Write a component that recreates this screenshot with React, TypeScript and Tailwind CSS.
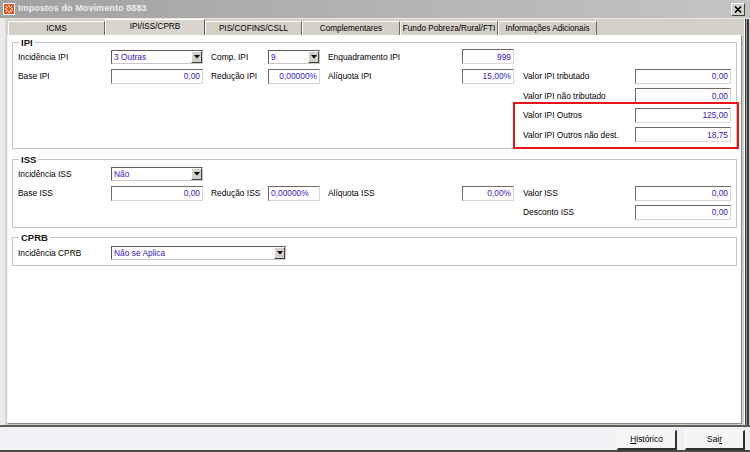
import React from "react";

const VALUE = "text-[#3324c4]";

function Label({ w, children }: { w: string; children: React.ReactNode }) {
  return (
    <span className={`${w} flex-none whitespace-nowrap text-[8.4px] leading-[10px] text-[#000]`}>
      {children}
    </span>
  );
}

function Input({ w, value, left }: { w: string; value: string; left?: boolean }) {
  return (
    <div
      className={`${w} h-[15px] flex-none flex items-center bg-white border border-t-[#6a6a6a] border-l-[#6a6a6a] border-r-[#d6d6d6] border-b-[#d6d6d6] px-[2px] text-[8.4px] leading-[10px] ${VALUE} ${
        left ? "justify-start" : "justify-end"
      }`}
    >
      {value}
    </div>
  );
}

function Select({ w, value }: { w: string; value: string }) {
  return (
    <div className={`${w} h-[14px] flex-none flex items-stretch bg-white border border-t-[#5a5a5a] border-l-[#5a5a5a] border-r-[#c8c8c8] border-b-[#c8c8c8]`}>
      <span className={`flex-1 pl-[2px] text-[8.4px] leading-[12px] ${VALUE}`}>{value}</span>
      <span className="w-[11px] flex items-center justify-center bg-[#d4d0c8] border border-t-white border-l-white border-r-[#404040] border-b-[#404040]">
        <svg width="6" height="4" viewBox="0 0 6 4">
          <path d="M0 0h6L3 3.5z" fill="#000" />
        </svg>
      </span>
    </div>
  );
}

function Group({ title, className, children }: { title: string; className: string; children: React.ReactNode }) {
  return (
    <fieldset className={`relative mx-[4px] border border-[#c4c4c4] pl-[5px] pr-[5px] ${className}`}>
      <legend className="ml-[1px] px-[2px] text-[9.5px] leading-[9px] font-bold text-[#111]">{title}</legend>
      {children}
    </fieldset>
  );
}

const tabs = [
  { label: "ICMS", w: "w-[97px]" },
  { label: "IPI/ISS/CPRB", w: "w-[100px]", active: true },
  { label: "PIS/COFINS/CSLL", w: "w-[97px]" },
  { label: "Complementares", w: "w-[98px]" },
  { label: "Fundo Pobreza/Rural/FTI", w: "w-[98px]" },
  { label: "Informações Adicionais", w: "w-[99px]" },
];

export default function App() {
  return (
    <div className="w-[750px] h-[452px] flex flex-col overflow-hidden bg-[#ececec] font-['Liberation_Sans',Arial,sans-serif]">
      {/* Title bar */}
      <div className="h-[19px] flex-none flex items-center bg-gradient-to-r from-[#a2a2a2] to-[#c4c4c4] border-b border-[#e8e8e8] pl-[3px] pr-[5px]">
        <svg width="12" height="12" viewBox="0 0 12 12" className="flex-none">
          <rect x="0" y="0" width="12" height="12" fill="#fff" />
          <rect x="1" y="1" width="10" height="10" fill="#e8581c" />
          <path d="M3 3l2 2M9 3L7 5M3 9l2-2M9 9L7 7M6 2v2M6 8v2M2 6h2M8 6h2" stroke="#fff" strokeWidth="1" />
        </svg>
        <span className="ml-[3px] text-[9px] font-bold text-[#ededed] tracking-[0.1px]">Impostos do Movimento 8883</span>
        <div className="ml-auto w-[14px] h-[13px] flex items-center justify-center bg-[#d4d0c8] border border-t-white border-l-white border-r-[#404040] border-b-[#404040]">
          <svg width="8" height="7" viewBox="0 0 8 7">
            <path d="M1 0.5l6 6M7 0.5l-6 6" stroke="#000" strokeWidth="1.6" />
          </svg>
        </div>
      </div>

      {/* Middle */}
      <div className="flex-1 flex min-h-0">
        <div className="w-[6px] flex-none bg-[#ebebeb] border-r border-[#d9d9d9]" />

        <div className="flex-1 flex flex-col bg-[#d4d0c8] pb-[1px]">
          {/* Tabs */}
          <div className="h-[16px] flex-none flex items-end pl-[2px]">
            {tabs.map((t) =>
              t.active ? (
                <div
                  key={t.label}
                  className={`${t.w} h-[16px] flex-none flex items-start justify-center pt-[2px] bg-[#dad6cf] border-t border-l border-t-white border-l-white border-r border-r-[#5a5a5a] text-[8.2px] leading-[10px] text-[#000]`}
                >
                  {t.label}
                </div>
              ) : (
                <div
                  key={t.label}
                  className={`${t.w} h-[14px] flex-none flex items-center justify-center bg-[#d4d0c8] border-t border-l border-t-white border-l-white border-r border-r-[#6a6a6a] text-[8.2px] leading-[10px] text-[#000]`}
                >
                  {t.label}
                </div>
              )
            )}
          </div>

          {/* Panel */}
          <div className="flex-1 ml-[1px] mr-[2px] bg-white border border-t-white border-l-[#f4f4f4] border-r-[#8a8a8a] border-b-[#8a8a8a]">
            <Group title="IPI" className="mt-[2px] pb-[3px]">
              <div className="flex items-center h-[19.5px]">
                <Label w="w-[93px]">Incidência IPI</Label>
                <Select w="w-[92px]" value="3 Outras" />
                <span className="w-[8px] flex-none" />
                <Label w="w-[57px]">Comp. IPI</Label>
                <Select w="w-[52px]" value="9" />
                <span className="w-[8px] flex-none" />
                <Label w="w-[134px]">Enquadramento IPI</Label>
                <Input w="w-[52px]" value="999" />
              </div>
              <div className="flex items-center h-[19.5px]">
                <Label w="w-[93px]">Base IPI</Label>
                <Input w="w-[92px]" value="0,00" />
                <span className="w-[8px] flex-none" />
                <Label w="w-[57px]">Redução IPI</Label>
                <Input w="w-[52px]" value="0,00000%" />
                <span className="w-[8px] flex-none" />
                <Label w="w-[134px]">Alíquota IPI</Label>
                <Input w="w-[52px]" value="15,00%" />
                <span className="w-[9px] flex-none" />
                <Label w="w-[112px]">Valor IPI tributado</Label>
                <Input w="w-[96px]" value="0,00" />
              </div>
              <div className="flex items-center h-[19.5px] pl-[505px]">
                <Label w="w-[112px]">Valor IPI não tributado</Label>
                <Input w="w-[96px]" value="0,00" />
              </div>
              <div className="relative">
                <div className="flex items-center h-[19.5px] pl-[505px]">
                  <Label w="w-[112px]">Valor IPI Outros</Label>
                  <Input w="w-[96px]" value="125,00" />
                </div>
                <div className="flex items-center h-[19.5px] pl-[505px]">
                  <Label w="w-[112px]">Valor IPI Outros não dest.</Label>
                  <Input w="w-[96px]" value="18,75" />
                </div>
                <div className="absolute left-[495px] top-[-4px] w-[226px] h-[47px] border-2 border-[#e8141c] pointer-events-none" />
              </div>
            </Group>

            <Group title="ISS" className="mt-[6px] pt-[1px] pb-[5px]">
              <div className="flex items-center h-[19px]">
                <Label w="w-[93px]">Incidência ISS</Label>
                <Select w="w-[92px]" value="Não" />
              </div>
              <div className="flex items-center h-[19px]">
                <Label w="w-[93px]">Base ISS</Label>
                <Input w="w-[92px]" value="0,00" />
                <span className="w-[8px] flex-none" />
                <Label w="w-[57px]">Redução ISS</Label>
                <Input w="w-[52px]" value="0,00000%" left />
                <span className="w-[8px] flex-none" />
                <Label w="w-[134px]">Alíquota ISS</Label>
                <Input w="w-[52px]" value="0,00%" />
                <span className="w-[9px] flex-none" />
                <Label w="w-[112px]">Valor ISS</Label>
                <Input w="w-[96px]" value="0,00" />
              </div>
              <div className="flex items-center h-[19px] pl-[505px]">
                <Label w="w-[112px]">Desconto ISS</Label>
                <Input w="w-[96px]" value="0,00" />
              </div>
            </Group>

            <Group title="CPRB" className="mt-[5px] pt-[2px] pb-[2px]">
              <div className="flex items-center h-[19px]">
                <Label w="w-[93px]">Incidência CPRB</Label>
                <Select w="w-[175px]" value="Não se Aplica" />
              </div>
            </Group>
          </div>
        </div>

        {/* Right frame */}
        <div className="w-[6px] flex-none flex">
          <div className="w-[1px] bg-white" />
          <div className="w-[1px] bg-[#3c3c3c]" />
          <div className="w-[1px] bg-[#9a9a9a]" />
          <div className="w-[2px] bg-[#3c3c3c]" />
          <div className="w-[1px] bg-[#cfcfcf]" />
        </div>
      </div>

      {/* Bottom bar */}
      <div className="h-[27px] flex-none flex items-start justify-end gap-[8px] pt-[3px] pr-[5px] bg-[#f1f1f5] border-t-2 border-t-[#5c5c5c] border-b-2 border-b-[#4a4a4a]">
        <button className="w-[60px] h-[20px] flex items-center justify-center bg-[#f5f5f5] border border-t-white border-l-white border-r-2 border-b-2 border-r-[#303030] border-b-[#303030] text-[8.4px] text-[#000]">
          <span>
            <span className="underline">H</span>istórico
          </span>
        </button>
        <button className="w-[60px] h-[20px] flex items-center justify-center bg-[#f5f5f5] border border-t-white border-l-white border-r-2 border-b-2 border-r-[#303030] border-b-[#303030] text-[8.4px] text-[#000]">
          <span>
            Sai<span className="underline">r</span>
          </span>
        </button>
      </div>
    </div>
  );
}
